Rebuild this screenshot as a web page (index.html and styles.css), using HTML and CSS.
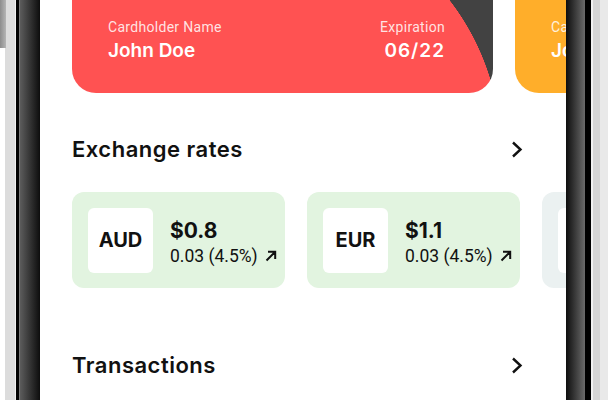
FILE: index.html
```html
<!DOCTYPE html>
<html lang="en">

<head>
    <meta charset="utf-8">
    <title>Wallet</title>
    <link rel="stylesheet" href="styles.css">
</head>

<body>
    <div class="device">
        <div class="bezel bezel-left">
            <span class="side-key"></span>
        </div>

        <main class="screen">
            <div class="cards">
                <div class="card card-red">
                    <div class="card-field">
                        <span class="card-label">Cardholder Name</span>
                        <span class="card-value">John Doe</span>
                    </div>
                    <div class="card-field card-field-right">
                        <span class="card-label">Expiration</span>
                        <span class="card-value card-date">06/22</span>
                    </div>
                </div>
                <div class="card card-orange">
                    <div class="card-field">
                        <span class="card-label">Cardholder Name</span>
                        <span class="card-value">John Doe</span>
                    </div>
                </div>
            </div>

            <section class="section">
                <header class="section-head">
                    <h2 class="section-title">Exchange rates</h2>
                    <svg class="chevron" width="12" height="17" viewBox="0 0 12 17">
                        <polyline points="2,1.5 9.5,8.5 2,15.5" />
                    </svg>
                </header>
                <div class="rates">
                    <div class="rate rate-green">
                        <div class="rate-code">AUD</div>
                        <div class="rate-info">
                            <span class="rate-price">$0.8</span>
                            <span class="rate-change">0.03 (4.5%)
                                <svg class="trend" width="12" height="12" viewBox="0 0 12 12">
                                    <path d="M1.5 10.5 L10 2 M3 1.8 H10.2 V9" />
                                </svg>
                            </span>
                        </div>
                    </div>
                    <div class="rate rate-green">
                        <div class="rate-code">EUR</div>
                        <div class="rate-info">
                            <span class="rate-price">$1.1</span>
                            <span class="rate-change">0.03 (4.5%)
                                <svg class="trend" width="12" height="12" viewBox="0 0 12 12">
                                    <path d="M1.5 10.5 L10 2 M3 1.8 H10.2 V9" />
                                </svg>
                            </span>
                        </div>
                    </div>
                    <div class="rate rate-grey">
                        <div class="rate-code"></div>
                    </div>
                </div>
            </section>

            <section class="section section-transactions">
                <header class="section-head">
                    <h2 class="section-title">Transactions</h2>
                    <svg class="chevron" width="12" height="17" viewBox="0 0 12 17">
                        <polyline points="2,1.5 9.5,8.5 2,15.5" />
                    </svg>
                </header>
            </section>
        </main>

        <div class="bezel bezel-right"></div>
    </div>
</body>

</html>
```

FILE: styles.css
```css
body {
    margin: 0;
    height: 400px;
    overflow: hidden;
    background: #fff;
    font-family: "Inter", "Roboto", sans-serif;
    color: #111;
}

.device {
    display: flex;
    height: 400px;
}

.bezel {
    flex: none;
    height: 100%;
}

.bezel-left {
    width: 40px;
    background: linear-gradient(to right,
            #fff 0 5px,
            #dcdcdc 5px 15px,
            #f0f0f0 15px 16px,
            #000 16px 19px,
            #7a7a7a 19px 20px,
            #5c5c5c 20px,
            #0d0d0d 40px);
}

.side-key {
    display: block;
    width: 6px;
    height: 48px;
    background: linear-gradient(to right, #8c8c8c, #b5b5b5);
}

.bezel-right {
    width: 42px;
    background: linear-gradient(to right,
            #0d0d0d 0,
            #6a6a6a 19px,
            #000 19px 25px,
            #f2f2f2 25px 27px,
            #d6d6d6 27px 34px,
            #e9e9e9 34px);
}

.screen {
    flex: none;
    width: 526px;
    min-width: 0;
    box-sizing: border-box;
    overflow: hidden;
    padding-left: 32px;
    background: #fff;
}

/* cards */

.cards {
    display: flex;
    gap: 22px;
    margin-top: -87px;
}

.card {
    flex: none;
    width: 421px;
    height: 180px;
    box-sizing: border-box;
    border-radius: 24px;
    padding: 0 48px 31px 36px;
    display: flex;
    align-items: flex-end;
    justify-content: space-between;
    color: #fff;
    white-space: nowrap;
}

.card-red {
    background: radial-gradient(circle 245px at 184px 237px, #ff5252 99.8%, #424242 100%);
}

.card-orange {
    background: #ffae2a;
}

.card-field {
    display: flex;
    flex-direction: column;
}

.card-field-right {
    align-items: flex-end;
}

.card-label {
    font-family: "Roboto", sans-serif;
    font-size: 14px;
    line-height: 16px;
    letter-spacing: 0.3px;
    color: rgba(255, 255, 255, 0.85);
}

.card-value {
    margin-top: 5px;
    font-size: 19px;
    line-height: 22px;
    font-weight: 600;
}

.card-date {
    letter-spacing: 1px;
}

/* sections */

.section-head {
    display: flex;
    align-items: center;
    justify-content: space-between;
    padding-right: 43px;
    margin-top: 42px;
}

.section-title {
    margin: 0;
    font-size: 22px;
    line-height: 28px;
    font-weight: 600;
    letter-spacing: 0.5px;
}

.chevron {
    fill: none;
    stroke: #111;
    stroke-width: 2.4;
}

.section-transactions .section-head {
    margin-top: 63px;
}

/* exchange rates */

.rates {
    display: flex;
    gap: 22px;
    margin-top: 29px;
}

.rate {
    flex: none;
    width: 213px;
    height: 96px;
    box-sizing: border-box;
    padding: 16px;
    border-radius: 12px;
    display: flex;
    align-items: center;
    gap: 17px;
    white-space: nowrap;
}

.rate-green {
    background: #e2f4e0;
}

.rate-grey {
    background: #ebf1f1;
}

.rate-code {
    flex: none;
    width: 65px;
    height: 65px;
    border-radius: 6px;
    background: #fff;
    display: flex;
    align-items: center;
    justify-content: center;
    font-size: 20px;
    font-weight: 700;
}

.rate-info {
    display: flex;
    flex-direction: column;
    margin-top: 4px;
}

.rate-price {
    font-size: 21px;
    line-height: 26px;
    font-weight: 700;
}

.rate-change {
    display: flex;
    align-items: center;
    gap: 7px;
    margin-top: 2px;
    font-family: "Roboto", sans-serif;
    font-size: 17.5px;
    line-height: 20px;
}

.trend {
    fill: none;
    stroke: #111;
    stroke-width: 2;
}
```
